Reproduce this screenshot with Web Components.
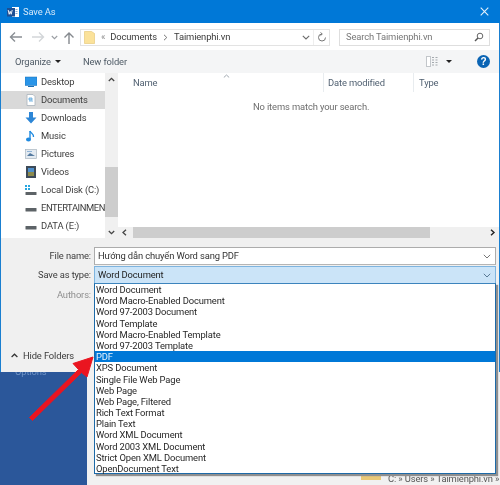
<![CDATA[<!DOCTYPE html>
<html><head><meta charset="utf-8"><style>
html,body{margin:0;padding:0;width:500px;height:485px;overflow:hidden;background:#f1f1f1}
body{font:9.4px/1.2 Roboto,"Liberation Sans",sans-serif;letter-spacing:-.13px;color:#333}
</style>
<script>
function def(name, css, html){
  customElements.define(name, class extends HTMLElement{
    constructor(){super();this.attachShadow({mode:'open'}).innerHTML='<style>'+css+'</style>'+html;}
  });
}
def('x-app',':host{display:flex;flex-direction:column;width:500px;height:485px;position:relative;overflow:hidden;filter:blur(.3px)}','<slot></slot>');
def('x-dialog',':host{display:flex;flex-direction:column;height:372px;flex:none;border-left:1px solid #1a7fd0;border-right:1px solid #1a7fd0;box-sizing:border-box;width:500px;background:#fff;position:relative;z-index:1}','<slot></slot>');
def('x-titlebar',`:host{display:flex;align-items:center;height:23px;margin:0 -1px;background:#0078d7;color:#d5e9f9;font-size:9.400px;padding:0 7px;gap:4px;flex:none}
.t{flex:1}`,`<svg width="12" height="12" viewBox="0 0 12 12"><rect x="5" y="1" width="7" height="10" fill="#fff"/><rect x="0" y="2" width="8" height="8.500" fill="#1d4f94"/><path d="M1.200 4l1 4.300 1-3 1 3 1-4.300" fill="none" stroke="#fff" stroke-width=".9"/><path d="M8.500 3.500h2M8.500 5.500h2M8.500 7.500h2" stroke="#6b94c8" stroke-width=".8"/></svg><span class="t"><slot></slot></span><svg width="9" height="9" viewBox="0 0 9 9" style="margin-right:4px"><path d="M.7.700l7.600 7.600M8.300.700L.7 8.300" stroke="#e2f0fb" stroke-width="1.100"/></svg>`);
def('x-navbar',`:host{display:flex;align-items:center;height:27px;flex:none;background:#fff;padding:1px 8px 0 8px;box-sizing:border-box}
.n{display:flex;align-items:center;width:71px;gap:0}
.a{display:flex;align-items:center;flex:none;width:250px;height:17px;box-sizing:border-box;border:1px solid #e3e3e3;color:#3a3a3a;white-space:nowrap}
.s{margin-left:9px;width:151px;height:17px;box-sizing:border-box;border:1px solid #dedede;display:flex;align-items:center;padding:0 5px 0 6px;color:#777}
.s span{flex:1}`,`<div class="n">
<svg width="14" height="12" viewBox="0 0 14 12"><path d="M1 6h12M6 1.500L1.500 6 6 10.500" fill="none" stroke="#8a8f94" stroke-width="1.400"/></svg>
<svg width="14" height="12" viewBox="0 0 14 12" style="margin-left:8px"><path d="M1 6h11M8 1.500L12.500 6 8 10.500" fill="none" stroke="#d3d6d9" stroke-width="1.400"/></svg>
<svg width="7" height="5" viewBox="0 0 7 5" style="margin-left:6px"><path d="M.8 1l2.700 2.700L6.200 1" fill="none" stroke="#9a9ea3" stroke-width="1.100"/></svg>
<svg width="12" height="13" viewBox="0 0 12 13" style="margin-left:5px"><path d="M6 13V2M1.500 6.500L6 2l4.500 4.500" fill="none" stroke="#85898e" stroke-width="1.400"/></svg>
</div>
<div class="a"><svg width="11" height="13" viewBox="0 0 11 13" style="margin-left:3px"><path d="M.5.500h7l3 2v10H.5z" fill="#fbe29a" stroke="#e6ca7c" stroke-width=".7"/></svg>
<span style="margin-left:6px;color:#8a8a8a">«</span><span style="margin-left:5px">Documents</span><svg width="5" height="7" viewBox="0 0 5 7" style="margin:0 6px 0 6px"><path d="M1 .8L3.800 3.500 1 6.200" fill="none" stroke="#666" stroke-width=".9"/></svg><span>Taimienphi.vn</span>
<span style="flex:1"></span>
<svg width="8" height="5" viewBox="0 0 8 5"><path d="M.8.800L4 4l3.200-3.200" fill="none" stroke="#6b6b6b" stroke-width="1.100"/></svg>
<span style="width:1px;height:15px;background:#eee;margin:0 3px"></span>
<svg width="10" height="11" viewBox="0 0 10 11" style="margin-right:2px"><path d="M5 2a3.500 3.500 0 1 0 3.500 3.500M3.500.5L5.300 2 3.500 3.600" fill="none" stroke="#777" stroke-width="1"/></svg></div>
<div class="s"><span>Search Taimienphi.vn</span><svg width="10" height="10" viewBox="0 0 10 10"><circle cx="6" cy="4" r="2.800" fill="none" stroke="#666" stroke-width="1"/><path d="M4 6L1 9" stroke="#555" stroke-width="1.500"/></svg></div>`);
def('x-toolbar',`:host{display:flex;align-items:center;height:23px;flex:none;background:#f4f5f6;color:#4f5b66;padding:0 9px 0 14px;box-sizing:border-box}
.c{width:0;height:0;border:3px solid transparent;border-top:3.500px solid #222;border-bottom:0}`,`<span>Organize</span><span class="c" style="margin-left:4px"></span><span style="margin-left:22px">New folder</span><span style="flex:1"></span>
<svg width="13" height="11" viewBox="0 0 13 11"><rect x=".5" y=".5" width="4" height="10" fill="#fff" stroke="#c2c6ca"/><path d="M6 1.500h2M9.500 1.500h2M6 4h2M9.500 4h2M6 6.500h2M9.500 6.500h2M6 9h2M9.500 9h2" stroke="#a3a8ad" stroke-width="1"/></svg>
<span class="c" style="margin-left:7px"></span>
<span style="margin-left:25px;width:13px;height:13px;border-radius:50%;background:#0a64b4;color:#fff;font:bold 10px/13px 'Liberation Sans',sans-serif;text-align:center">?</span>`);
def('x-browser',`:host{display:flex;height:165px;flex:none;background:#fff}
.tree{width:104px;flex:none;overflow:hidden}
.i{display:flex;align-items:center;height:18px;padding-left:24px;white-space:nowrap;color:#3c3c3c;gap:4px}
.i svg{flex:none;width:12px;height:12px}
.i.sel{background:#d9d9d9}
.vs{width:13px;flex:none;background:#f0f0f0;display:flex;flex-direction:column;align-items:center}
.th{width:100%;height:50px;background:#cdcdcd;margin-top:85px;flex:none}
.main{flex:1;display:flex;flex-direction:column;position:relative;min-width:0}
.hd{display:flex;height:19px;color:#4f5f70;align-items:center}
.hd span{display:block}
.sep{width:1px;height:19px;background:#e8ecef}
.caret{position:absolute;left:105px;top:1px}
.msg{flex:1;text-align:left;padding:9px 0 0 135px;color:#6d6d6d;white-space:nowrap}
.hs{height:11px;background:#f0f0f0;display:flex;align-items:center;flex:none}
.hs .tb{width:297px;height:11px;background:#cdcdcd;margin-left:2px}`,`<div class="tree">
<div class="i"><svg viewBox="0 0 12 12"><rect x="0" y="1" width="12" height="8.500" fill="#2a95e8" stroke="#1b6fb5" stroke-width=".5"/><path d="M3 10.500h6" stroke="#1b6fb5"/></svg>Desktop</div>
<div class="i sel"><svg viewBox="0 0 12 12"><path d="M2 .5h6l2 2v9H2z" fill="#fff" stroke="#aab4bd" stroke-width=".8"/><path d="M4 4h3v2H4zM4 7h4" stroke="#5aa6dd" fill="#bcdcf2" stroke-width=".8"/></svg>Documents</div>
<div class="i"><svg viewBox="0 0 12 12"><path d="M4 0h4v5.500h3.500L6 11.500.5 5.500H4z" fill="#2d86d6"/></svg>Downloads</div>
<div class="i"><svg viewBox="0 0 12 12"><path d="M5 1v8" stroke="#1f8ae0" stroke-width="1.400"/><ellipse cx="3.500" cy="9.500" rx="2.500" ry="2" fill="#1f8ae0"/><path d="M5 1c1 2.500 4 2.500 3.500 6" fill="none" stroke="#1f8ae0" stroke-width="1.300"/></svg>Music</div>
<div class="i"><svg viewBox="0 0 12 12"><rect x=".5" y="1.500" width="11" height="9" fill="#e3eaf1" stroke="#a9b5bf" stroke-width=".7"/><path d="M2 8l3-3 5 3z" fill="#547aa0"/><path d="M2 3.500h5" stroke="#8fb3d6"/></svg>Pictures</div>
<div class="i"><svg viewBox="0 0 12 12"><rect x="1" y="0" width="10" height="12" fill="#3d4a58"/><rect x="3" y="2" width="6" height="4" fill="#4f90cc"/><rect x="3" y="6" width="6" height="4" fill="#8c8a4c"/></svg>Videos</div>
<div class="i"><svg viewBox="0 0 12 12"><rect x=".5" y="8" width="11" height="3" rx=".5" fill="#5d6367"/><path d="M0 1h2v2H0zM3 1h2v2H3zM0 4h2v2H0zM3 4h2v2H3z" fill="#28a6e0"/></svg>Local Disk (C:)</div>
<div class="i"><svg viewBox="0 0 12 12"><rect x=".5" y="6" width="11" height="3.500" rx=".5" fill="#5d6367"/></svg><span style="letter-spacing:-.42px">ENTERTAINMEN</span></div>
<div class="i"><svg viewBox="0 0 12 12"><rect x=".5" y="6" width="11" height="3.500" rx=".5" fill="#5d6367"/></svg>DATA (E:)</div>
</div>
<div class="vs"><svg width="7" height="5" viewBox="0 0 7 5" style="margin-top:4px;flex:none"><path d="M.8 4L3.500 1.300 6.200 4" fill="none" stroke="#444" stroke-width="1.300"/></svg><div class="th"></div><span style="flex:1"></span><svg width="7" height="5" viewBox="0 0 7 5" style="margin-bottom:3px;flex:none"><path d="M.8 1L3.500 3.700 6.200 1" fill="none" stroke="#444" stroke-width="1.300"/></svg></div>
<div class="main">
<div class="hd"><span style="width:15px"></span><span style="width:190px">Name</span><span class="sep"></span><span style="width:4px"></span><span style="width:85px">Date modified</span><span class="sep"></span><span style="width:5px"></span><span>Type</span></div>
<svg class="caret" width="7" height="4" viewBox="0 0 7 4"><path d="M.8 3.500L3.500 1 6.200 3.500" fill="none" stroke="#a0a8b0"/></svg>
<div class="msg">No items match your search.</div>
<div class="hs"><svg width="13" height="7" viewBox="0 0 13 7" style="flex:none"><path d="M8 .8L5 3.500 8 6.200" fill="none" stroke="#444" stroke-width="1.300"/></svg><div class="tb"></div><span style="flex:1"></span><svg width="8" height="7" viewBox="0 0 8 7" style="margin-right:2px"><path d="M2 .8L5 3.500 2 6.200" fill="none" stroke="#222" stroke-width="1.400"/></svg></div>
</div>`);
def('x-form',`:host{display:flex;flex:1;flex-direction:column;background:#f0f0f0;padding:9px 3px 0 0;position:relative;min-height:0}
.r{display:flex;height:18px;margin-bottom:1px;align-items:center}
label{width:93px;text-align:right;padding-right:3px;box-sizing:border-box;color:#3c3c3c;white-space:nowrap;flex:none}
.b{flex:1;height:18px;box-sizing:border-box;border:1px solid #acacac;border-bottom-color:#b5b5b5;background:#fff;display:flex;align-items:center;padding:0 4px 0 3px;color:#333}
.b span{flex:1}
.sel{background:#cbe4f8;border-color:#7eb4df;border-bottom:1px solid #1c6fb2;color:#222}
.au{color:#8f8f8f;margin-top:4px;height:14px;display:flex}
.hide{margin-top:auto;margin-bottom:11px;display:flex;align-items:center;color:#3a3a3a;padding-left:10px;gap:5px}
.menu{position:absolute;left:93px;top:45px;width:402px;height:191px;box-sizing:border-box;border:1px solid #1d6aa8;border-top:1px solid #3c84bd;background:#fff;box-shadow:2px 2px 1px #8f8f8f}
.menu div{height:11.200px;line-height:11.200px;padding-left:1px;color:#262626;white-space:nowrap}
.menu .on{background:#0078d7;color:#e8f3fc}
`,`<div class="r"><label>File name:</label><div class="b"><span>Hướng dẫn chuyển Word sang PDF</span><svg width="8" height="5" viewBox="0 0 8 5"><path d="M.8.800L4 4l3.200-3.200" fill="none" stroke="#777" stroke-width="1"/></svg></div></div>
<div class="r"><label>Save as type:</label><div class="b sel"><span>Word Document</span><svg width="8" height="5" viewBox="0 0 8 5"><path d="M.8.800L4 4l3.200-3.200" fill="none" stroke="#5a7a95" stroke-width="1"/></svg></div></div>
<div class="au"><label style="color:#8f8f8f">Authors:</label></div>
<div class="hide"><svg width="7" height="5" viewBox="0 0 7 5"><path d="M.6 4L3.500 1.200 6.400 4" fill="none" stroke="#333" stroke-width="1.200"/></svg>Hide Folders</div>
<div class="menu">
<div>Word Document</div><div>Word Macro-Enabled Document</div><div>Word 97-2003 Document</div><div>Word Template</div><div>Word Macro-Enabled Template</div><div>Word 97-2003 Template</div><div class="on">PDF</div><div>XPS Document</div><div>Single File Web Page</div><div>Web Page</div><div>Web Page, Filtered</div><div>Rich Text Format</div><div>Plain Text</div><div>Word XML Document</div><div>Word 2003 XML Document</div><div>Strict Open XML Document</div><div>OpenDocument Text</div>
</div>`);
def('x-backdrop',`:host{display:flex;flex:1;min-height:0;background:#f1f1f1;position:relative}
.l{width:87px;flex:none;background:#2b579a;color:#6f93c6;padding:0 0 0 15px;box-sizing:border-box;line-height:11px}
.l span{display:block;margin-top:-6px}
.m{flex:1;display:flex;align-items:flex-end;padding:0 0 1px 274px;white-space:nowrap;color:#555;gap:7px}
.f{width:20px;height:6px;background:#e9c877;margin-bottom:4px;flex:none}`,`<div class="l"><span>Options</span></div><div class="m"><span class="f"></span><span>C: » Users » Taimienphi.vn »</span></div>`);
def('x-arrow',`:host{position:absolute;left:0;top:0;width:500px;height:485px;pointer-events:none;display:block;z-index:2}`,`<svg width="500" height="485" viewBox="0 0 500 485"><path d="M29.500 417.500L78.500 369.500L73 363.500L93 357L87 377L81.500 372.500L32.500 420.500Z" fill="#ea1520" stroke="#ea1520" stroke-width="1" stroke-linejoin="round"/></svg>`);
</script>
</head><body><x-app><x-dialog><x-titlebar>Save As</x-titlebar><x-navbar></x-navbar><x-toolbar></x-toolbar><x-browser></x-browser><x-form></x-form></x-dialog><x-backdrop></x-backdrop><x-arrow></x-arrow></x-app></body></html>]]>
